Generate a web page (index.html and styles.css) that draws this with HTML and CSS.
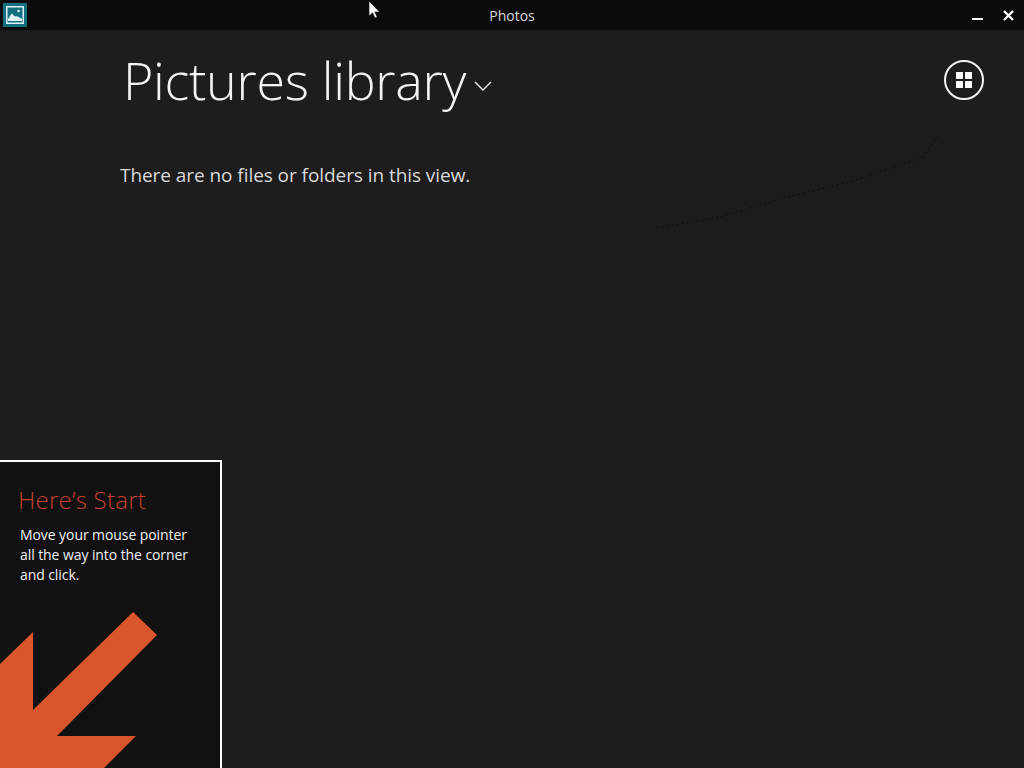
FILE: index.html
```html
<!DOCTYPE html>
<html lang="en">
<head>
    <meta charset="UTF-8">
    <meta name="viewport" content="width=device-width, initial-scale=1.0">
    <title>Photos</title>
    <link rel="stylesheet" href="styles.css">
</head>
<body>
    <header class="titlebar">
        <div class="titlebar-left">
            <div class="app-icon">
                <svg width="18" height="18" viewBox="0 0 18 18">
                    <rect x="0.75" y="0.75" width="16.5" height="16.5" fill="none" stroke="#dff2f5" stroke-width="1.5"/>
                    <circle cx="12.5" cy="5" r="1.3" fill="#dff2f5"/>
                    <path d="M2 13 C3 12 4 9 6 7.5 C7.5 9 8 10 9.5 10.5 C11 10 13 11 14 12 C15 12 16 13 16 13.5 V15 H2 Z" fill="#dff2f5"/>
                </svg>
            </div>
        </div>
        <div class="titlebar-title">Photos</div>
        <div class="titlebar-buttons">
            <svg width="11" height="11" viewBox="0 0 11 11"><rect y="8" width="11" height="2" fill="#fff"/></svg>
            <svg width="11" height="11" viewBox="0 0 11 11"><path d="M1 1 L10 10 M10 1 L1 10" stroke="#fff" stroke-width="2.4"/></svg>
        </div>
    </header>

    <main class="content">
        <div class="page-head">
            <h1>Pictures library</h1>
            <svg class="chevron" width="18" height="10" viewBox="0 0 18 10"><path d="M1 1 L9 9 L17 1" fill="none" stroke="#f2f2f2" stroke-width="1.4"/></svg>
            <button class="view-toggle">
                <span></span><span></span><span></span><span></span>
            </button>
        </div>
        <p class="empty-text">There are no files or folders in this view.</p>
    </main>

    <svg class="specks" width="1024" height="768" viewBox="0 0 1024 768">
        <path d="M657 228 L720 217 L787 197 L850 182 L923 157 L940 133" fill="none" stroke="#0f0f0f" stroke-width="1" stroke-dasharray="2 3"/>
    </svg>

    <aside class="start-tip">
        <h2>Here’s Start</h2>
        <p>Move your mouse pointer all the way into the corner and click.</p>
        <svg class="start-arrow" width="220" height="168" viewBox="0 0 220 168">
            <polygon points="0,64 33,32 33,110 133,12 157,35 57,136 136,136 104,168 0,168" fill="#d9552b"/>
        </svg>
    </aside>

    <svg class="cursor" width="13" height="20" viewBox="0 0 13 20">
        <path d="M1 1 V16 L4.6 12.8 L7 18 L9.2 17 L6.8 12 H11.6 Z" fill="#fff" stroke="#111" stroke-width="0.6"/>
    </svg>
</body>
</html>
```

FILE: styles.css
```css
* {
    margin: 0;
    padding: 0;
    box-sizing: border-box;
}
html, body {
    height: 768px;
    overflow: hidden;
}
body {
    background: #1d1d1d;
    color: #fff;
    font-family: "Open Sans", "Liberation Sans", sans-serif;
    position: relative;
}
.titlebar {
    height: 31px;
    background: #0b0b0b;
    border-bottom: 1px solid #1a1a1a;
    display: grid;
    grid-template-columns: 1fr auto 1fr;
    align-items: center;
}
.titlebar-left {
    display: flex;
    align-items: flex-start;
    height: 100%;
}
.app-icon {
    width: 24px;
    height: 24px;
    margin-left: 3px;
    margin-top: 3px;
    background: #14707f;
    display: flex;
    align-items: center;
    justify-content: center;
}
.titlebar-title {
    font-size: 14px;
    color: #d8d8d8;
    letter-spacing: -0.03px;
    padding-top: 1px;
}
.titlebar-buttons {
    display: flex;
    justify-content: flex-end;
    gap: 20px;
    padding-right: 10px;
}
.content {
    padding-left: 120px;
}
.page-head {
    display: flex;
    align-items: center;
    height: 97px;
    padding-left: 3px;
    padding-right: 40px;
}
h1 {
    font-size: 52px;
    font-weight: 300;
    line-height: 97px;
    letter-spacing: -0.3px;
    color: #f4f4f4;
    margin-top: -1px;
}
.chevron {
    margin-left: 8px;
    margin-top: 12px;
}
.view-toggle {
    margin-left: auto;
    width: 40px;
    height: 40px;
    border: 2px solid #f4f4f4;
    border-radius: 50%;
    background: none;
    display: grid;
    grid-template-columns: 7px 7px;
    grid-template-rows: 7px 7px;
    gap: 2px;
    align-content: center;
    justify-content: center;
}
.view-toggle span {
    background: #fff;
}
.empty-text {
    font-size: 19px;
    letter-spacing: -0.06px;
    color: #d9d9d9;
    margin-top: 34px;
}
.specks {
    position: absolute;
    top: 0;
    left: 0;
    pointer-events: none;
}
.start-tip {
    position: absolute;
    left: 0;
    top: 460px;
    width: 222px;
    height: 308px;
    background: #111;
    border-top: 2px solid #fff;
    border-right: 2px solid #fff;
    padding: 22px 0 0 18px;
}
.start-tip h2 {
    font-size: 24px;
    font-weight: 300;
    line-height: 32px;
    letter-spacing: 0.25px;
    color: #c2402f;
}
.start-tip p {
    font-size: 14px;
    line-height: 20px;
    letter-spacing: -0.08px;
    color: #f0f0f0;
    margin-top: 9px;
    margin-left: 2px;
    width: 180px;
}
.start-arrow {
    position: absolute;
    left: 0;
    bottom: 0;
}
.cursor {
    position: absolute;
    left: 368px;
    top: 0;
}
```
